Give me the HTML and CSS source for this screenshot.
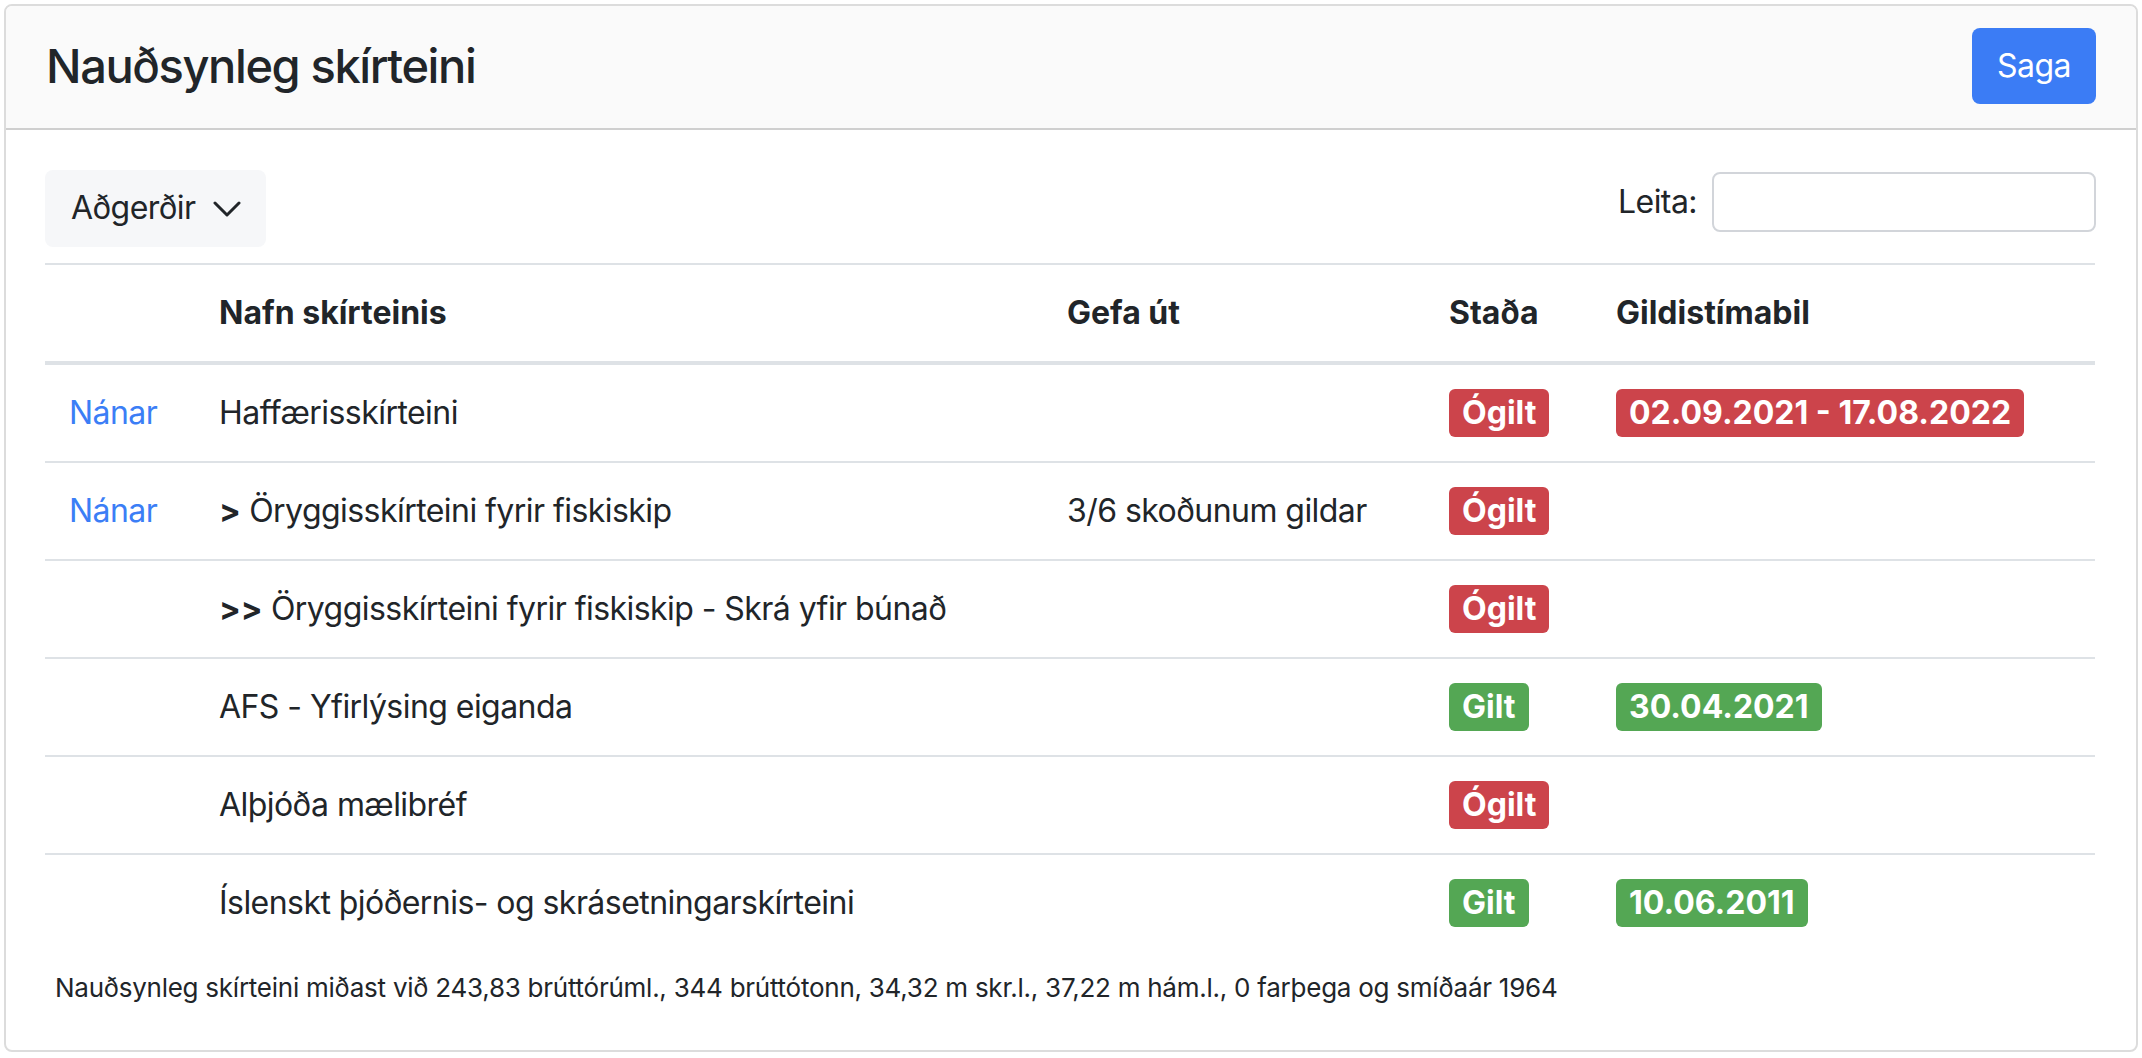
FILE: index.html
```html
<!DOCTYPE html>
<html lang="is">
<head>
<meta charset="utf-8">
<title>Nauðsynleg skírteini</title>
<link rel="stylesheet" href="styles.css">
</head>
<body>
<div class="card">
  <div class="card-header">
    <h4 class="title">Nauðsynleg skírteini</h4>
    <button class="btn btn-primary" type="button">Saga</button>
  </div>
  <div class="card-body">
    <div class="toolbar">
      <button class="btn btn-light dropdown" type="button">Aðgerðir
        <svg class="chev" width="28" height="16" viewBox="0 0 28 16"><polyline points="2,2 14,14 26,2" fill="none" stroke="#212529" stroke-width="3" stroke-linecap="round" stroke-linejoin="round"/></svg>
      </button>
      <label class="search">Leita: <input type="search" class="search-input"></label>
    </div>
    <table class="table">
      <colgroup>
        <col class="c-link"><col class="c-name"><col class="c-issue"><col class="c-status"><col class="c-period">
      </colgroup>
      <thead>
        <tr><th></th><th>Nafn skírteinis</th><th>Gefa út</th><th>Staða</th><th>Gildistímabil</th></tr>
      </thead>
      <tbody>
        <tr>
          <td><a class="link" href="#">Nánar</a></td>
          <td>Haffærisskírteini</td>
          <td></td>
          <td><span class="badge bad">Ógilt</span></td>
          <td><span class="badge bad">02.09.2021 - 17.08.2022</span></td>
        </tr>
        <tr>
          <td><a class="link" href="#">Nánar</a></td>
          <td><b>&gt;</b> Öryggisskírteini fyrir fiskiskip</td>
          <td>3/6 skoðunum gildar</td>
          <td><span class="badge bad">Ógilt</span></td>
          <td></td>
        </tr>
        <tr>
          <td></td>
          <td><b>&gt;&gt;</b> Öryggisskírteini fyrir fiskiskip - Skrá yfir búnað</td>
          <td></td>
          <td><span class="badge bad">Ógilt</span></td>
          <td></td>
        </tr>
        <tr>
          <td></td>
          <td>AFS - Yfirlýsing eiganda</td>
          <td></td>
          <td><span class="badge good">Gilt</span></td>
          <td><span class="badge good">30.04.2021</span></td>
        </tr>
        <tr>
          <td></td>
          <td>Alþjóða mælibréf</td>
          <td></td>
          <td><span class="badge bad">Ógilt</span></td>
          <td></td>
        </tr>
        <tr>
          <td></td>
          <td>Íslenskt þjóðernis- og skrásetningarskírteini</td>
          <td></td>
          <td><span class="badge good">Gilt</span></td>
          <td><span class="badge good">10.06.2011</span></td>
        </tr>
      </tbody>
    </table>
    <p class="note">Nauðsynleg skírteini miðast við 243,83 brúttórúml., 344 brúttótonn, 34,32 m skr.l., 37,22 m hám.l., 0 farþega og smíðaár 1964</p>
  </div>
</div>
</body>
</html>
```

FILE: styles.css
```css
* { box-sizing: border-box; }
html, body { background: #ffffff; }
body {
  margin: 4px;
  font-family: Inter, "Noto Sans", "Liberation Sans", sans-serif;
  font-size: 32px;
  line-height: 48px;
  color: #212529;
  letter-spacing: -0.55px;
}
.card {
  border: 2px solid #dcdcdc;
  border-radius: 8px;
  background: #fff;
  height: 1048px;
  overflow: hidden;
}
.card-header {
  display: flex;
  justify-content: space-between;
  align-items: center;
  padding: 22px 40px 24px;
  background: #fafafa;
  border-bottom: 2px solid #cfcfcf;
}
.title {
  margin: 0;
  font-size: 47px;
  font-weight: 500;
  line-height: 58px;
  letter-spacing: -1.4px;
}
.btn {
  font-family: inherit;
  font-size: 32px;
  line-height: 48px;
  letter-spacing: -0.55px;
  padding: 14px 24px;
  border: 0;
  border-radius: 8px;
  cursor: pointer;
}
.btn-primary {
  background: #3b7cf5;
  color: #fff;
  padding: 14px 25px;
}
.card-body {
  padding: 40px 40px 40px 39px;
}
.toolbar {
  display: flex;
  justify-content: space-between;
  align-items: flex-start;
  margin-bottom: 16px;
}
.btn-light {
  background: #f6f7f9;
  color: #212529;
}
.dropdown {
  display: flex;
  align-items: center;
  gap: 17px;
  padding: 14px 25px 15px 26px;
}
.chev { display: block; margin-top: 2px; }
.search {
  display: flex;
  align-items: center;
  gap: 15px;
  margin-top: 2px;
}
.search-input {
  width: 384px;
  height: 60px;
  border: 2px solid #d2d5da;
  border-radius: 8px;
  font-family: inherit;
  font-size: 32px;
  padding: 0 20px;
  background: #fff;
}
.table {
  width: 2050px;
  border-collapse: collapse;
  table-layout: fixed;
}
.c-link { width: 150px; }
.c-name { width: 848px; }
.c-issue { width: 382px; }
.c-status { width: 167px; }
.c-period { width: 503px; }
.table th {
  text-align: left;
  font-weight: 700;
  letter-spacing: 0;
  padding: 24px;
  vertical-align: bottom;
  border-top: 2px solid #dee2e6;
  border-bottom: 4px solid #dee2e6;
}
.table td {
  padding: 24px;
  vertical-align: top;
  border-top: 2px solid #dee2e6;
  white-space: nowrap;
}
.table td b { letter-spacing: 0; }
.link {
  color: #3b7ef6;
  text-decoration: none;
}
.badge {
  display: inline-block;
  vertical-align: top;
  font-weight: 700;
  font-size: 32px;
  line-height: 32px;
  letter-spacing: 0;
  padding: 8px 13px;
  border-radius: 6px;
  color: #fff;
}
.bad { background: #cc444b; }
.good { background: #54a754; }
.note {
  margin: 17px 0 0;
  padding-left: 10px;
  font-size: 26px;
  line-height: 39px;
  letter-spacing: -0.25px;
}
```
